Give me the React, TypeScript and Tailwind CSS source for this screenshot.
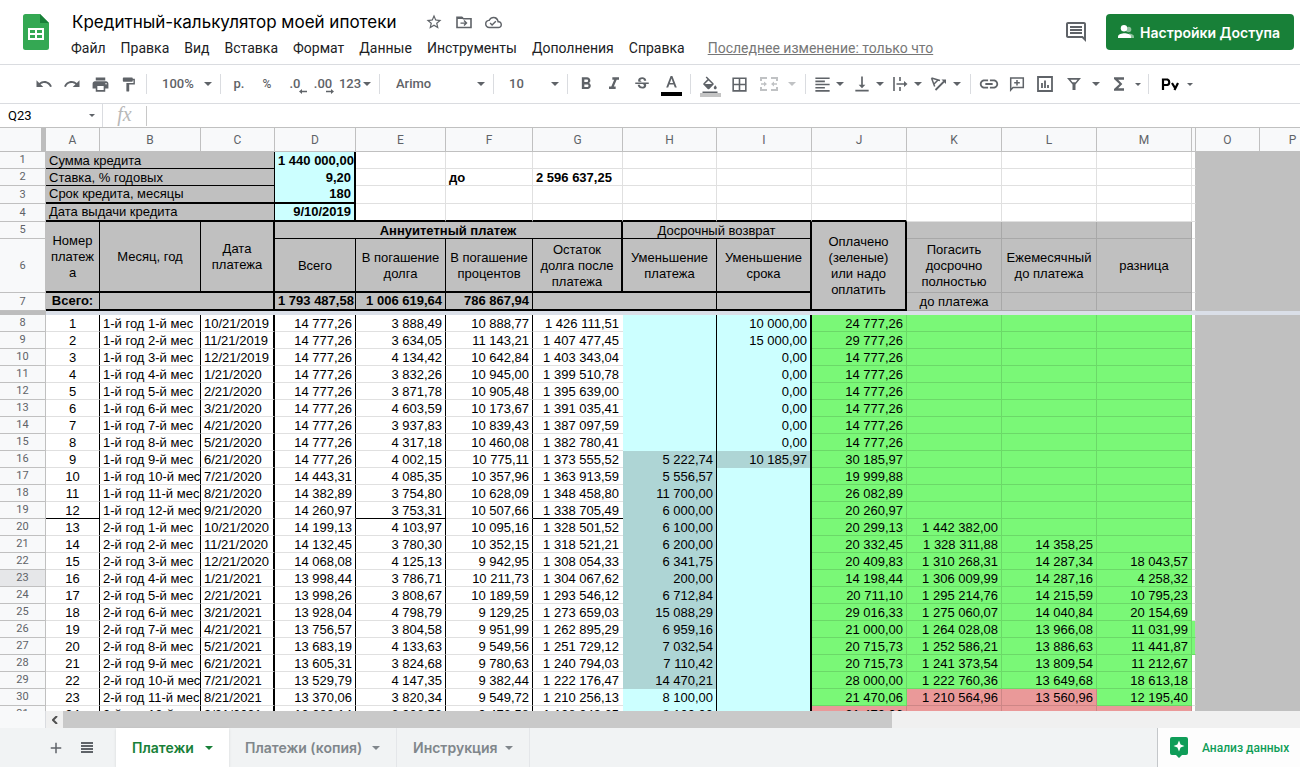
import React from 'react';
import clsx from 'clsx';
import {
  MdUndo,
  MdRedo,
  MdPrint,
  MdFormatPaint,
  MdFormatBold,
  MdFormatItalic,
  MdStrikethroughS,
  MdFormatColorFill,
  MdBorderAll,
  MdFormatAlignLeft,
  MdVerticalAlignBottom,
  MdLink,
  MdFunctions,
  MdStarBorder,
  MdOutlineCloudDone,
  MdOutlineComment,
  MdAdd,
} from 'react-icons/md';

const MENU = ['Файл', 'Правка', 'Вид', 'Вставка', 'Формат', 'Данные', 'Инструменты', 'Дополнения', 'Справка'];

const COLUMNS = [
  { name: 'A', width: 'w-[54px]' },
  { name: 'B', width: 'w-[101px]' },
  { name: 'C', width: 'w-[74px]' },
  { name: 'D', width: 'w-[81px]' },
  { name: 'E', width: 'w-[90px]' },
  { name: 'F', width: 'w-[87px]' },
  { name: 'G', width: 'w-[90px]' },
  { name: 'H', width: 'w-[94px]' },
  { name: 'I', width: 'w-[95px]' },
  { name: 'J', width: 'w-[95px]' },
  { name: 'K', width: 'w-[95px]' },
  { name: 'L', width: 'w-[95px]' },
  { name: 'M', width: 'w-[95px]' },
  { name: '', width: 'w-[4px]' },
  { name: 'O', width: 'w-[64px]' },
  { name: 'P', width: 'w-[66px]' },
];

// values go in column order from D; K, L and M are filled from the second year on
const PAYMENTS: { period: string; date: string; values: string[] }[] = [
  { period: '1-й год 1-й мес', date: '10/21/2019', values: ['14 777,26', '3 888,49', '10 888,77', '1 426 111,51', '', '10 000,00', '24 777,26'] },
  { period: '1-й год 2-й мес', date: '11/21/2019', values: ['14 777,26', '3 634,05', '11 143,21', '1 407 477,45', '', '15 000,00', '29 777,26'] },
  { period: '1-й год 3-й мес', date: '12/21/2019', values: ['14 777,26', '4 134,42', '10 642,84', '1 403 343,04', '', '0,00', '14 777,26'] },
  { period: '1-й год 4-й мес', date: '1/21/2020', values: ['14 777,26', '3 832,26', '10 945,00', '1 399 510,78', '', '0,00', '14 777,26'] },
  { period: '1-й год 5-й мес', date: '2/21/2020', values: ['14 777,26', '3 871,78', '10 905,48', '1 395 639,00', '', '0,00', '14 777,26'] },
  { period: '1-й год 6-й мес', date: '3/21/2020', values: ['14 777,26', '4 603,59', '10 173,67', '1 391 035,41', '', '0,00', '14 777,26'] },
  { period: '1-й год 7-й мес', date: '4/21/2020', values: ['14 777,26', '3 937,83', '10 839,43', '1 387 097,59', '', '0,00', '14 777,26'] },
  { period: '1-й год 8-й мес', date: '5/21/2020', values: ['14 777,26', '4 317,18', '10 460,08', '1 382 780,41', '', '0,00', '14 777,26'] },
  { period: '1-й год 9-й мес', date: '6/21/2020', values: ['14 777,26', '4 002,15', '10 775,11', '1 373 555,52', '5 222,74', '10 185,97', '30 185,97'] },
  { period: '1-й год 10-й мес', date: '7/21/2020', values: ['14 443,31', '4 085,35', '10 357,96', '1 363 913,59', '5 556,57', '', '19 999,88'] },
  { period: '1-й год 11-й мес', date: '8/21/2020', values: ['14 382,89', '3 754,80', '10 628,09', '1 348 458,80', '11 700,00', '', '26 082,89'] },
  { period: '1-й год 12-й мес', date: '9/21/2020', values: ['14 260,97', '3 753,31', '10 507,66', '1 338 705,49', '6 000,00', '', '20 260,97'] },
  { period: '2-й год 1-й мес', date: '10/21/2020', values: ['14 199,13', '4 103,97', '10 095,16', '1 328 501,52', '6 100,00', '', '20 299,13', '1 442 382,00'] },
  { period: '2-й год 2-й мес', date: '11/21/2020', values: ['14 132,45', '3 780,30', '10 352,15', '1 318 521,21', '6 200,00', '', '20 332,45', '1 328 311,88', '14 358,25'] },
  { period: '2-й год 3-й мес', date: '12/21/2020', values: ['14 068,08', '4 125,13', '9 942,95', '1 308 054,33', '6 341,75', '', '20 409,83', '1 310 268,31', '14 287,34', '18 043,57'] },
  { period: '2-й год 4-й мес', date: '1/21/2021', values: ['13 998,44', '3 786,71', '10 211,73', '1 304 067,62', '200,00', '', '14 198,44', '1 306 009,99', '14 287,16', '4 258,32'] },
  { period: '2-й год 5-й мес', date: '2/21/2021', values: ['13 998,26', '3 808,67', '10 189,59', '1 293 546,12', '6 712,84', '', '20 711,10', '1 295 214,76', '14 215,59', '10 795,23'] },
  { period: '2-й год 6-й мес', date: '3/21/2021', values: ['13 928,04', '4 798,79', '9 129,25', '1 273 659,03', '15 088,29', '', '29 016,33', '1 275 060,07', '14 040,84', '20 154,69'] },
  { period: '2-й год 7-й мес', date: '4/21/2021', values: ['13 756,57', '3 804,58', '9 951,99', '1 262 895,29', '6 959,16', '', '21 000,00', '1 264 028,08', '13 966,08', '11 031,99'] },
  { period: '2-й год 8-й мес', date: '5/21/2021', values: ['13 683,19', '4 133,63', '9 549,56', '1 251 729,12', '7 032,54', '', '20 715,73', '1 252 586,21', '13 886,63', '11 441,87'] },
  { period: '2-й год 9-й мес', date: '6/21/2021', values: ['13 605,31', '3 824,68', '9 780,63', '1 240 794,03', '7 110,42', '', '20 715,73', '1 241 373,54', '13 809,54', '11 212,67'] },
  { period: '2-й год 10-й мес', date: '7/21/2021', values: ['13 529,79', '4 147,35', '9 382,44', '1 222 176,47', '14 470,21', '', '28 000,00', '1 222 760,36', '13 649,68', '18 613,18'] },
  { period: '2-й год 11-й мес', date: '8/21/2021', values: ['13 370,06', '3 820,34', '9 549,72', '1 210 256,13', '8 100,00', '', '21 470,06', '1 210 564,96', '13 560,96', '12 195,40'] },
  { period: '2-й год 12-й мес', date: '9/21/2021', values: ['13 280,14', '3 906,56', '9 473,58', '1 198 249,65', '8 100,00', '', '21 470,06'] },
];

const GRID = 'border-r border-b border-black/[0.12]';
const FIELD = 'border-b border-r border-black bg-[#c0c0c0] px-[3px]';
const HEAD = 'border-b-2 border-r border-black bg-[#c0c0c0] text-center';
const SUBHEAD = 'border-b-2 border-r border-black bg-[#c0c0c0] pt-0.5 text-center';
const PLAIN_HEAD = 'border-b border-r border-black/[0.12] bg-[#c0c0c0] text-center';

function Caret({ small = false, className = '' }: { small?: boolean; className?: string }) {
  return (
    <svg viewBox="0 0 8 4" className={clsx('shrink-0 fill-current', small ? 'h-[3px] w-[6px]' : 'h-1 w-2', className)} aria-hidden="true">
      <path d="M0 0h8L4 4z" />
    </svg>
  );
}

function Tool({ label, className = 'w-7', children }: { label: string; className?: string; children: React.ReactNode }) {
  return (
    <button type="button" aria-label={label} title={label} className={clsx('flex h-7 shrink-0 items-center justify-center', className)}>
      {children}
    </button>
  );
}

function Group({ className, children }: { className: string; children: React.ReactNode }) {
  return <div className={clsx('flex h-5 shrink-0 items-center border-r border-[#dadce0]', className)}>{children}</div>;
}

function Picker({ label, value, className }: { label: string; value: string; className: string }) {
  return (
    <div className="relative flex w-full items-center">
      <select aria-label={label} className={clsx('w-full appearance-none bg-transparent text-[13px] font-medium outline-none', className)}>
        <option>{value}</option>
      </select>
      <Caret className="pointer-events-none absolute right-2" />
    </div>
  );
}

function Header() {
  return (
    <header className="flex h-[65px] shrink-0 items-start border-b border-[#dadce0] pl-[23px] pr-[6px] pt-[10px]">
      <a href="#" aria-label="Таблицы" className="mt-1 block">
        <svg viewBox="0 0 26 36" className="h-9 w-[26px]">
          <path d="M2.500 0H17l9 9v24.500a2.500 2.500 0 0 1-2.500 2.500h-21A2.500 2.500 0 0 1 0 33.500v-31A2.500 2.500 0 0 1 2.500 0z" fill="#34a853" />
          <path d="M17 0l9 9h-9z" fill="#188038" />
          <path d="M5 14h16v12H5zM7 16v3h5v-3zM14 16v3h5v-3zM7 21v3h5v-3zM14 21v3h5v-3z" fill="#fff" fillRule="evenodd" />
        </svg>
      </a>
      <div className="ml-[14px]">
        <div className="flex h-6 items-center text-[#5f6368]">
          <h1 className="px-[9px] font-[Inter,sans-serif] text-[17px] leading-6 text-black">Кредитный-калькулятор моей ипотеки</h1>
          <button type="button" aria-label="Пометить" className="ml-5 flex"><MdStarBorder size={18} /></button>
          <button type="button" aria-label="Переместить" className="ml-3 flex">
            <svg viewBox="0 0 18 18" className="size-[18px]" fill="none" stroke="currentColor" strokeWidth="1.6">
              <path d="M2 4.200h4.800l1.600 1.600H16v8.700H2z" />
              <path d="M2 5h6" strokeWidth="2" />
              <path d="M5.500 10.100h6M9 7.600l2.500 2.500L9 12.600" strokeWidth="1.400" />
            </svg>
          </button>
          <button type="button" aria-label="Сохранено" className="ml-3 flex"><MdOutlineCloudDone size={17} /></button>
        </div>
        <nav className="mt-1 flex h-5 items-center font-[Roboto,sans-serif] text-[14px] text-[#202124]">
          {MENU.map((item) => (
            <button key={item} type="button" className="pl-2 pr-[7px]">{item}</button>
          ))}
          <a href="#" className="ml-4 text-[14px] text-[#777] underline">Последнее изменение: только что</a>
        </nav>
      </div>
      <div className="ml-auto mt-1 flex h-9 items-center">
        <button type="button" aria-label="Комментарии" className="mr-[18px] text-[#5f6368]"><MdOutlineComment size={24} /></button>
        <button type="button" className="flex h-9 w-[188px] items-center rounded bg-[#188038] pl-3 font-[Inter,sans-serif] text-[14px] font-semibold text-white">
          <svg viewBox="0 0 16 14" className="mr-[6px] h-[14px] w-4" fill="currentColor">
            <circle cx="10.500" cy="4.500" r="2.800" opacity=".5" />
            <path d="M11 8.500c2.500.3 5 1.300 5 3V13h-3z" opacity=".5" />
            <circle cx="6" cy="3.200" r="3.200" />
            <path d="M0 13v-1.500C0 9.300 4 8.200 6.500 8.200S13 9.300 13 11.500V13z" />
          </svg>
          Настройки Доступа
        </button>
      </div>
    </header>
  );
}

function Toolbar() {
  return (
    <div className="flex h-[39px] shrink-0 items-center border-b border-[#dadce0] pl-[29px] font-[Roboto,sans-serif] text-[13px] font-medium text-[#5f6368]">
      <Group className="w-[118px] pl-px">
        <Tool label="Отменить"><MdUndo size={18} /></Tool>
        <Tool label="Повторить"><MdRedo size={18} /></Tool>
        <Tool label="Печать"><MdPrint size={19} /></Tool>
        <Tool label="Копировать формат"><MdFormatPaint size={17} /></Tool>
      </Group>
      <Group className="w-[74px]">
        <Picker label="Масштаб" value="100%" className="pl-[15px]" />
      </Group>
      <Group className="w-[159px] pl-1">
        <Tool label="Денежный формат">р.</Tool>
        <Tool label="Процентный формат"><span className="text-[12px]">%</span></Tool>
        <Tool label="Меньше знаков">
          <span className="relative">.0
            <svg viewBox="0 0 8 5" className="absolute -right-1.5 bottom-0 h-[5px] w-2 fill-current"><path d="M0 2.500L3 0v1.700h5v1.600H3V5z" /></svg>
          </span>
        </Tool>
        <Tool label="Больше знаков">
          <span className="relative">.00
            <svg viewBox="0 0 8 5" className="absolute -right-0.5 bottom-0 h-[5px] w-2 fill-current"><path d="M8 2.500L5 0v1.700H0v1.600h5V5z" /></svg>
          </span>
        </Tool>
        <Tool label="Другие форматы" className="ml-0.5 w-8">
          123<Caret className="ml-0.5" />
        </Tool>
      </Group>
      <Group className="w-[114px]">
        <Picker label="Шрифт" value="Arimo" className="pl-[16px]" />
      </Group>
      <Group className="w-[74px]">
        <Picker label="Размер шрифта" value="10" className="pl-[15px]" />
      </Group>
      <Group className="w-[123px] pl-1">
        <Tool label="Полужирный"><MdFormatBold size={20} /></Tool>
        <Tool label="Курсив"><MdFormatItalic size={20} /></Tool>
        <Tool label="Зачеркнутый"><MdStrikethroughS size={18} /></Tool>
        <Tool label="Цвет текста" className="w-[30px]">
          <svg viewBox="0 0 21 22" className="mt-1 h-[22px] w-[21px]">
            <path d="M9.600 1h1.800l4.400 11.500h-2l-1.100-3H8.300l-1.100 3h-2zM8.900 8h3.200l-1.600-4.500z" fill="#5f6368" />
            <path d="M0 17h21v4H0z" fill="#000" />
          </svg>
        </Tool>
      </Group>
      <Group className="w-[115px] pl-1">
        <Tool label="Цвет заливки" className="w-[30px]">
          <span className="mt-1 flex flex-col items-center">
            <MdFormatColorFill size={18} viewBox="0 0 24 20" />
            <span className="h-1 w-[21px] bg-[#c4c4c4]" />
          </span>
        </Tool>
        <Tool label="Границы"><MdBorderAll size={19} /></Tool>
        <Tool label="Объединить ячейки" className="w-[50px] text-[#c0c2c4]">
          <svg viewBox="0 0 18 16" className="mr-2.5 h-4 w-[18px]" fill="none" stroke="currentColor" strokeWidth="2">
            <path d="M1 5V2h6M11 2h6v3M17 11v3h-6M7 14H1v-3" />
            <path d="M1 8h4M13 8h4" strokeWidth="1.500" />
            <path d="M4 5.500L7 8l-3 2.500zM14 5.500L11 8l3 2.500z" fill="currentColor" stroke="none" />
          </svg>
          <Caret />
        </Tool>
      </Group>
      <Group className="w-[165px] pl-0.5">
        <Tool label="Горизонтальное выравнивание" className="w-10"><MdFormatAlignLeft size={19} className="mr-1" /><Caret /></Tool>
        <Tool label="Вертикальное выравнивание" className="w-[39px]"><MdVerticalAlignBottom size={20} className="mr-1" /><Caret /></Tool>
        <Tool label="Перенос текста" className="w-[39px]">
          <svg viewBox="0 0 16 16" className="mr-1.5 size-4" fill="none" stroke="currentColor" strokeWidth="1.600">
            <path d="M2 1v14M8 1v4M8 11v4M4.500 8H13" />
            <path d="M12 5l3.500 3-3.500 3z" fill="currentColor" stroke="none" />
          </svg>
          <Caret />
        </Tool>
        <Tool label="Поворот текста" className="w-[39px]">
          <svg viewBox="0 0 17 16" className="mr-1.5 h-4 w-[17px]" fill="none" stroke="currentColor" strokeWidth="1.500">
            <path d="M1.500 2L10 4.500M1.500 2l3.200 8.500M8 4L4.300 7.700" />
            <path d="M5.500 14l8.500-8.500" strokeWidth="1.800" />
            <path d="M11.500 3.500H16V8z" fill="currentColor" stroke="none" />
          </svg>
          <Caret />
        </Tool>
      </Group>
      <Group className="w-[178px] pl-1">
        <Tool label="Вставить ссылку"><MdLink size={22} /></Tool>
        <Tool label="Добавить комментарий">
          <svg viewBox="0 0 16 16" className="size-4" fill="none" stroke="currentColor" strokeWidth="1.500">
            <path d="M1.700 14V2h12.600v9.500H4z" />
            <path d="M8 4v5.500M5.200 6.800h5.600" />
          </svg>
        </Tool>
        <Tool label="Вставить диаграмму">
          <svg viewBox="0 0 16 16" className="size-4" fill="none" stroke="currentColor" strokeWidth="1.800">
            <path d="M1 1h14v14H1zM5 7v5M8 4.500V12M11 9v3" />
          </svg>
        </Tool>
        <Tool label="Фильтр" className="w-12">
          <svg viewBox="0 0 16 14" className="mr-2.5 h-[14px] w-4" fill="currentColor" fillRule="evenodd">
            <path d="M1 1h14L9.500 7.500V13h-3V7.500zM4.500 2.800L6.500 5.300h3l2-2.500z" />
          </svg>
          <Caret />
        </Tool>
        <Tool label="Функции" className="w-9"><MdFunctions size={20} className="mr-1.5" /><Caret small /></Tool>
      </Group>
      <Tool label="Способы ввода" className="ml-2 w-10 text-black">
        <svg viewBox="0 0 18 14" className="mr-2 h-[14px] w-[18px]" fill="none" stroke="currentColor" strokeWidth="2.200">
          <path d="M2 13V2.500h4.500a3 3 0 0 1 0 5.500H2" />
          <path d="M11 6l3 5M17 6l-3.500 7" />
        </svg>
        <Caret small className="text-[#5f6368]" />
      </Tool>
    </div>
  );
}

function FormulaBar() {
  return (
    <div className="flex h-6 shrink-0 items-center border-b border-[#c0c0c0] font-[Roboto,sans-serif]">
      <div className="relative flex h-full w-[103px] items-center border-r border-[#dadce0]">
        <input aria-label="Ячейка" defaultValue="Q23" className="w-full bg-transparent pl-2 text-[13px] outline-none" />
        <Caret small className="absolute right-[7px] text-[#5f6368]" />
      </div>
      <label htmlFor="formula" className="flex h-5 w-11 items-center justify-center border-r border-[#c8c8c8] pb-1 font-['Liberation_Serif',serif] text-[20px] italic text-[#b8b8b8]">fx</label>
      <input id="formula" className="min-w-0 flex-1 px-2 outline-none" />
    </div>
  );
}

function RowHead({ n, selected = false }: { n: number; selected?: boolean }) {
  return (
    <th
      scope="row"
      className={clsx(
        'border-b border-r border-[#c0c0c0] py-px text-center font-[Roboto,sans-serif] text-[11px] font-normal leading-[14px] text-[#5f6368]',
        selected ? 'bg-[#e6e7e9]' : 'bg-[#f8f9fa]',
      )}
    >
      {n}
    </th>
  );
}

// column N is a sliver, O and P are filled grey and have no grid
function Tail({ filled = false }: { filled?: boolean }) {
  return (
    <>
      <td className={clsx('border-b border-r border-b-black/[0.12] border-r-[#c0c0c0]', filled && 'bg-[#7af877]')} />
      <td colSpan={2} className="bg-[#c0c0c0]" />
    </>
  );
}

function Blank({ count, className = GRID }: { count: number; className?: string }) {
  return (
    <>
      {Array.from({ length: count }, (_, i) => (
        <td key={i} className={className} />
      ))}
    </>
  );
}

function FrozenRows() {
  const thick = 'border-r border-b-2 border-r-black/[0.12] border-b-black';
  return (
    <>
      <tr className="h-[17px] leading-[15px]">
        <RowHead n={1} />
        <td colSpan={3} className={clsx(FIELD, 'pt-px')}>Сумма кредита</td>
        <td className="overflow-hidden border-r-2 border-black bg-[#ccffff] py-px pl-[3px] text-left font-bold">1 440 000,00</td>
        <Blank count={9} />
        <Tail />
      </tr>
      <tr className="h-[17px] leading-[15px]">
        <RowHead n={2} />
        <td colSpan={3} className={clsx(FIELD, 'pt-px')}>Ставка, % годовых</td>
        <td className="border-r-2 border-black bg-[#ccffff] px-[3px] py-px text-right font-bold">9,20</td>
        <Blank count={1} />
        <td className={clsx(GRID, 'px-[3px] pt-px font-bold')}>до</td>
        <td className={clsx(GRID, 'px-[3px] pt-px font-bold')}>2 596 637,25</td>
        <Blank count={6} />
        <Tail />
      </tr>
      <tr className="h-[18px]">
        <RowHead n={3} />
        <td colSpan={3} className="border-b-2 border-r border-black bg-[#c0c0c0] px-[3px]">Срок кредита, месяцы</td>
        <td className="border-b-2 border-r-2 border-black bg-[#ccffff] px-[3px] text-right font-bold">180</td>
        <Blank count={9} />
        <Tail />
      </tr>
      <tr className="h-[18px]">
        <RowHead n={4} />
        <td colSpan={3} className="border-b-2 border-r border-black bg-[#c0c0c0] px-[3px]">Дата выдачи кредита</td>
        <td className="border-b-2 border-r-2 border-black bg-[#ccffff] px-[3px] text-right font-bold">9/10/2019</td>
        <Blank count={6} className={thick} />
        <Blank count={3} />
        <Tail />
      </tr>
      <tr className="h-[17px]">
        <RowHead n={5} />
        <th rowSpan={2} className={clsx(HEAD, 'font-normal')}>Номер<br />платеж<br />а</th>
        <th rowSpan={2} className={clsx(HEAD, 'font-normal')}>Месяц, год</th>
        <th rowSpan={2} className="border-b-2 border-r-2 border-black bg-[#c0c0c0] font-normal">Дата<br />платежа</th>
        <th colSpan={4} className="border-b border-r-2 border-black bg-[#c0c0c0] pt-px font-bold leading-[15px]">Аннуитетный платеж</th>
        <th colSpan={2} className="border-b border-r-2 border-black bg-[#c0c0c0] pt-px font-normal leading-[15px]">Досрочный возврат</th>
        <th rowSpan={3} className="border-b-2 border-r-2 border-black bg-[#c0c0c0] font-normal">Оплачено<br />(зеленые)<br />или надо<br />оплатить</th>
        <Blank count={3} className={PLAIN_HEAD} />
        <Tail />
      </tr>
      <tr className="h-[54px]">
        <RowHead n={6} />
        <td className={SUBHEAD}>Всего</td>
        <td className={SUBHEAD}>В погашение<br />долга</td>
        <td className={SUBHEAD}>В погашение<br />процентов</td>
        <td className="border-b-2 border-r-2 border-black bg-[#c0c0c0] pt-0.5 text-center">Остаток<br />долга после<br />платежа</td>
        <td className={SUBHEAD}>Уменьшение<br />платежа</td>
        <td className="border-b-2 border-r-2 border-black bg-[#c0c0c0] pt-0.5 text-center">Уменьшение<br />срока</td>
        <td className={PLAIN_HEAD}>Погасить<br />досрочно<br />полностью</td>
        <td className={PLAIN_HEAD}>Ежемесячный<br />до платежа</td>
        <td className={PLAIN_HEAD}>разница</td>
        <Tail />
      </tr>
      <tr className="h-[18px] font-bold">
        <RowHead n={7} />
        <td className={HEAD}>Всего:</td>
        <td colSpan={2} className="border-b-2 border-r-2 border-black bg-[#c0c0c0]" />
        <td className="overflow-hidden border-b-2 border-r border-black bg-[#c0c0c0] pl-[3px] text-left">1 793 487,58</td>
        <td className="border-b-2 border-r border-black bg-[#c0c0c0] px-[3px] text-right">1 006 619,64</td>
        <td className="border-b-2 border-r border-black bg-[#c0c0c0] px-[3px] text-right">786 867,94</td>
        <td colSpan={2} className={HEAD} />
        <td className="border-b-2 border-r-2 border-black bg-[#c0c0c0]" />
        <td className={clsx(PLAIN_HEAD, 'font-normal')}>до платежа</td>
        <Blank count={2} className={PLAIN_HEAD} />
        <Tail />
      </tr>
    </>
  );
}

function PaymentRow({ index }: { index: number }) {
  const { period, date, values } = PAYMENTS[index];
  const row = index + 8;
  const yearEnd = row === 19 ? 'border-b-black' : 'border-b-black/[0.12]';
  const [total, debt, interest, rest, lessPay = '', lessTerm = '', paid = '', ...extra] = values;
  const green = 'bg-[#7af877]';
  const red = 'bg-[#ea9999]';
  return (
    <tr className="h-[17px] text-right leading-[15px]">
      <RowHead n={row} selected={row === 23} />
      <td className={clsx('border-b border-r border-r-black pt-px text-center', yearEnd)}>{index + 1}</td>
      <td className="overflow-hidden border-b border-r border-b-black/[0.12] border-r-black pl-[3px] pt-px text-left">{period}</td>
      <td className="border-b border-r-2 border-b-black/[0.12] border-r-black pl-[3px] pt-px text-left">{date}</td>
      <td className="border-b border-r border-b-black/[0.12] border-r-black px-[3px] pt-px">{total}</td>
      <td className={clsx('border-b border-r border-r-black px-[3px] pt-px', yearEnd)}>{debt}</td>
      <td className="border-b border-r border-b-black/[0.12] border-r-black px-[3px] pt-px">{interest}</td>
      <td className={clsx('border-b pr-1 pt-px', yearEnd)}>{rest}</td>
      <td className={clsx('border-r border-black px-[3px] py-px', row >= 16 && row <= 29 ? 'bg-[#aed5d5]' : 'bg-[#ccffff]')}>{lessPay}</td>
      <td className={clsx('border-r-2 border-black px-[3px] py-px', row === 16 ? 'bg-[#aed5d5]' : 'bg-[#ccffff]')}>{lessTerm}</td>
      <td className={clsx(GRID, 'px-[3px] pt-px', row > 30 ? red : green)}>{paid}</td>
      {[0, 1, 2].map((i) => (
        <td key={i} className={clsx(GRID, 'px-[3px] pt-px', row > 30 || (row === 30 && i < 2) ? red : green)}>{extra[i]}</td>
      ))}
      <Tail filled={row === 26 || row === 27} />
    </tr>
  );
}

function Sheet() {
  return (
    <main className="min-h-0 flex-1 overflow-hidden">
      <table className="w-[1326px] table-fixed border-separate border-spacing-0 whitespace-nowrap font-['Liberation_Sans',Arial,sans-serif] text-[13px] leading-4 text-black">
        <colgroup>
          <col className="w-[46px]" />
          {COLUMNS.map((c) => (
            <col key={c.name} className={c.width} />
          ))}
        </colgroup>
        <thead>
          <tr className="h-6 bg-[#f8f9fa] font-[Roboto,sans-serif] text-[12px] text-[#5f6368]">
            <th className="border-b border-r-[5px] border-[#bdbdbd]" />
            {COLUMNS.map((c) => (
              <th key={c.name} scope="col" className="border-b border-r border-[#c0c0c0] font-normal">{c.name}</th>
            ))}
          </tr>
        </thead>
        <tbody>
          <FrozenRows />
          <tr className="h-1">
            <td className="bg-[#bdbdbd]" />
            <td colSpan={16} className="bg-[#dadfe8]" />
          </tr>
          {PAYMENTS.map((p, i) => (
            <PaymentRow key={p.date} index={i} />
          ))}
        </tbody>
      </table>
    </main>
  );
}

function ScrollStrip() {
  return (
    <div className="flex h-[17px] shrink-0 bg-[#f0f0f0]">
      <div className="w-[46px] border-r border-[#dadce0] bg-[#f8f9fa]" />
      <button type="button" aria-label="Прокрутить влево" className="flex w-[17px] items-center justify-center text-[#505050]">
        <svg viewBox="0 0 6 8" className="h-2 w-1.5" fill="none" stroke="currentColor" strokeWidth="2"><path d="M5 0L1 4l4 4" /></svg>
      </button>
      <div className="flex-1"><div className="h-full w-[67%] bg-[#c9c9c9]" /></div>
    </div>
  );
}

function Tabs() {
  return (
    <footer className="flex h-[39px] shrink-0 items-stretch bg-[#f1f3f4] pl-[42px] font-[Inter,sans-serif] text-[14px] font-semibold text-[#80868b]">
      <button type="button" aria-label="Добавить лист" className="flex w-7 items-center justify-center text-[#5f6368]"><MdAdd size={18} /></button>
      <button type="button" aria-label="Все листы" className="ml-[3px] mr-[15px] flex w-7 items-center justify-center text-[#5f6368]">
        <svg viewBox="0 0 12 11" className="h-[11px] w-3 fill-current"><path d="M0 0h12v2H0zM0 3h12v2H0zM0 6h12v2H0zM0 9h12v2H0z" /></svg>
      </button>
      <button type="button" className="flex w-[113px] items-center justify-between bg-white px-4 text-[#188038] shadow">Платежи<Caret /></button>
      <button type="button" className="flex w-[168px] items-center justify-between border-r border-[#e4e6e9] px-4">Платежи (копия)<Caret /></button>
      <button type="button" className="flex w-[133px] items-center justify-between border-r border-[#e4e6e9] px-4">Инструкция<Caret /></button>
      <button type="button" className="ml-auto flex w-[143px] items-center border-l border-[#c4c7ca] bg-[#fdfdfd] pl-3 font-[Roboto,sans-serif] text-[12px] font-medium text-[#0f9d58]">
        <svg viewBox="0 0 18 21" className="mr-3.5 h-[21px] w-[18px]">
          <path d="M2 0h14a2 2 0 0 1 2 2v14a2 2 0 0 1-2 2h-4l-3 3-3-3H2a2 2 0 0 1-2-2V2a2 2 0 0 1 2-2z" fill="#0f9d58" />
          <path d="M9 3.500l1.600 3.900L14.500 9l-3.900 1.600L9 14.500l-1.600-3.900L3.500 9l3.900-1.600z" fill="#fff" />
        </svg>
        Анализ данных
      </button>
    </footer>
  );
}

export default function App() {
  return (
    <div className="flex h-screen flex-col overflow-hidden bg-white">
      <Header />
      <Toolbar />
      <FormulaBar />
      <Sheet />
      <ScrollStrip />
      <Tabs />
    </div>
  );
}
